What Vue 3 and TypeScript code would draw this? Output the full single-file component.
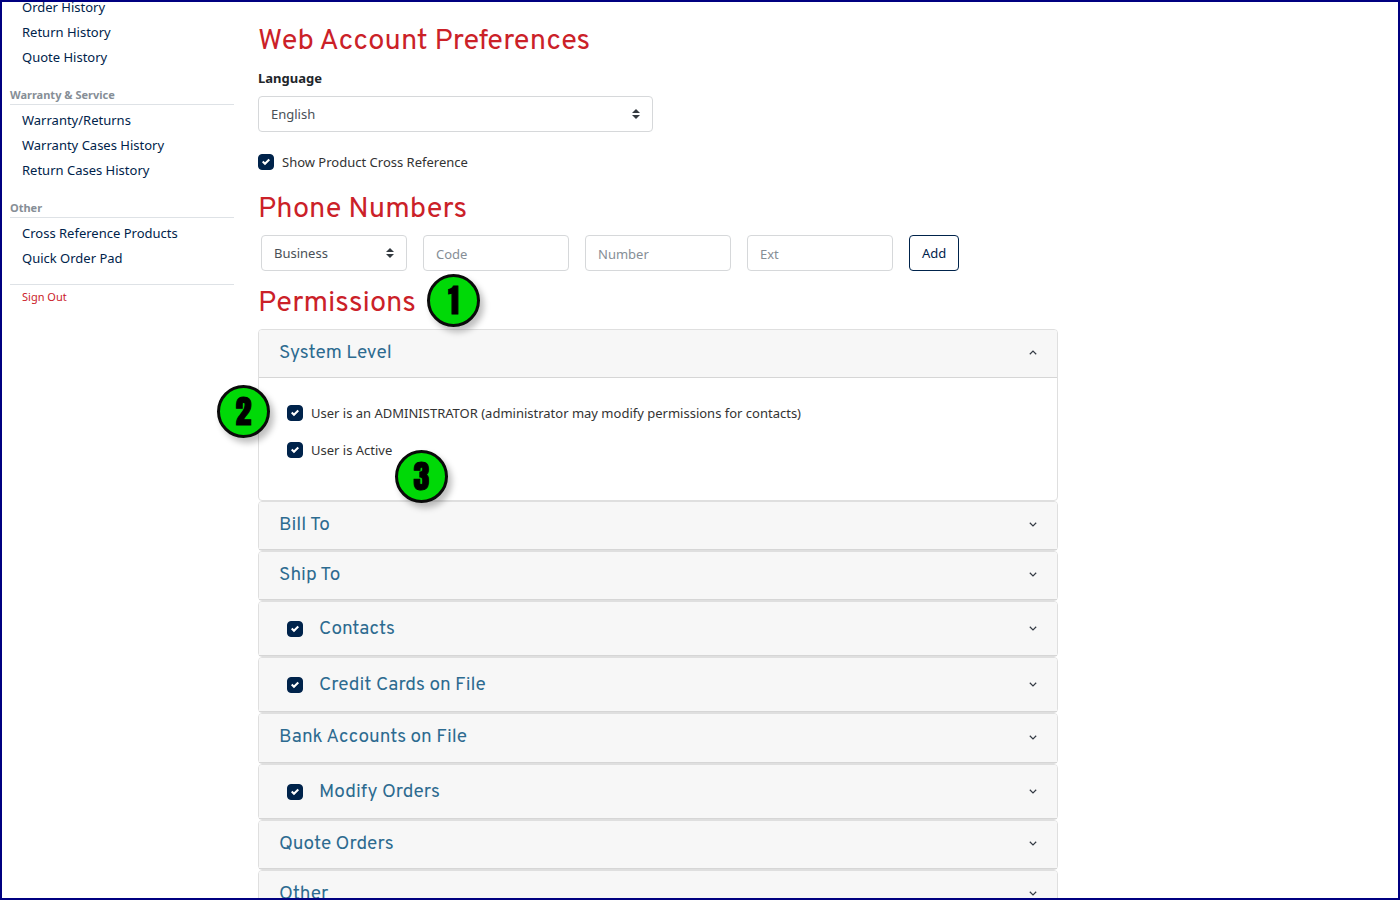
<script setup lang="ts">
import { reactive, ref } from 'vue'

interface NavGroup {
  title?: string
  links: string[]
}

interface Panel {
  id: string
  title: string
  open: boolean
  toggle: boolean
  enabled: boolean
  size: 'plain' | 'medium' | 'tall'
}

const navGroups: NavGroup[] = [
  { links: ['Order History', 'Return History', 'Quote History'] },
  { title: 'Warranty & Service', links: ['Warranty/Returns', 'Warranty Cases History', 'Return Cases History'] },
  { title: 'Other', links: ['Cross Reference Products', 'Quick Order Pad'] },
]

const language = ref('English')
const crossReference = ref(true)
const phoneType = ref('Business')
const phone = reactive({ code: '', number: '', ext: '' })
const isAdmin = ref(true)
const isActive = ref(true)

const panels = reactive<Panel[]>([
  { id: 'system', title: 'System Level', open: true, toggle: false, enabled: false, size: 'plain' },
  { id: 'bill', title: 'Bill To', open: false, toggle: false, enabled: false, size: 'plain' },
  { id: 'ship', title: 'Ship To', open: false, toggle: false, enabled: false, size: 'plain' },
  { id: 'contacts', title: 'Contacts', open: false, toggle: true, enabled: true, size: 'tall' },
  { id: 'cards', title: 'Credit Cards on File', open: false, toggle: true, enabled: true, size: 'tall' },
  { id: 'bank', title: 'Bank Accounts on File', open: false, toggle: false, enabled: false, size: 'medium' },
  { id: 'modify', title: 'Modify Orders', open: false, toggle: true, enabled: true, size: 'tall' },
  { id: 'quote', title: 'Quote Orders', open: false, toggle: false, enabled: false, size: 'plain' },
  { id: 'other', title: 'Other', open: false, toggle: false, enabled: false, size: 'plain' },
])
</script>

<template>
  <div class="frame">
    <nav class="sidebar" aria-label="Account">
      <section v-for="(group, i) in navGroups" :key="i" class="nav-group">
        <h2 v-if="group.title" class="nav-title">{{ group.title }}</h2>
        <ul class="nav-list">
          <li v-for="link in group.links" :key="link"><a href="#">{{ link }}</a></li>
        </ul>
      </section>
      <div class="sign-out"><a href="#">Sign Out</a></div>
    </nav>

    <main class="content">
      <h1 class="heading">Web Account Preferences</h1>
      <label class="field-label" for="language">Language</label>
      <select id="language" v-model="language" class="control select language">
        <option>English</option>
        <option>French</option>
      </select>
      <div class="check-row cross">
        <input id="cross" v-model="crossReference" type="checkbox" class="check" />
        <label for="cross">Show Product Cross Reference</label>
      </div>

      <h1 class="heading">Phone Numbers</h1>
      <form class="phone-row" @submit.prevent>
        <select v-model="phoneType" class="control select" aria-label="Phone type">
          <option>Business</option>
          <option>Mobile</option>
        </select>
        <input v-model="phone.code" class="control text" type="text" placeholder="Code" aria-label="Code" />
        <input v-model="phone.number" class="control text" type="text" placeholder="Number" aria-label="Number" />
        <input v-model="phone.ext" class="control text" type="text" placeholder="Ext" aria-label="Ext" />
        <button type="submit" class="add">Add</button>
      </form>

      <div class="permissions-title">
        <h1 class="heading">Permissions</h1>
        <span class="badge badge-one">1</span>
      </div>

      <section v-for="panel in panels" :key="panel.id" class="card">
        <header class="card-header" :class="panel.size">
          <input v-if="panel.toggle" :id="panel.id" v-model="panel.enabled" type="checkbox" class="check" />
          <h2 class="card-title">
            <label v-if="panel.toggle" :for="panel.id">{{ panel.title }}</label>
            <template v-else>{{ panel.title }}</template>
          </h2>
          <button
            type="button"
            class="chevron"
            :aria-expanded="panel.open"
            :aria-label="panel.title"
            @click="panel.open = !panel.open"
          >
            <svg viewBox="0 0 8 5" width="8" height="5" aria-hidden="true">
              <path v-if="panel.open" d="M.8 4.2 4 1.1l3.2 3.1" />
              <path v-else d="M.8.8 4 3.9 7.2.8" />
            </svg>
          </button>
        </header>
        <div v-if="panel.open" class="card-body">
          <template v-if="panel.id === 'system'">
            <div class="check-row">
              <input id="admin" v-model="isAdmin" type="checkbox" class="check" />
              <label for="admin">User is an ADMINISTRATOR (administrator may modify permissions for contacts)</label>
              <span class="badge badge-two">2</span>
            </div>
            <div class="check-row">
              <input id="active" v-model="isActive" type="checkbox" class="check" />
              <label for="active">User is Active</label>
              <span class="badge badge-three">3</span>
            </div>
          </template>
        </div>
      </section>
    </main>
  </div>
</template>

<style>
body {
  margin: 0;
  background: #fff;
}
</style>

<style scoped>
* {
  box-sizing: border-box;
}

.frame {
  display: grid;
  grid-template-columns: 224px minmax(0, 1fr);
  column-gap: 24px;
  height: 100vh;
  padding: 0 24px 0 8px;
  overflow: hidden;
  border: 2px solid #000080;
  font-family: 'Segoe UI', 'Noto Sans', sans-serif;
  font-size: 13px;
  line-height: 21px;
  color: #333;
}

a {
  color: #00234b;
  text-decoration: none;
}

.sidebar {
  margin-top: -7px;
}

.nav-group {
  margin-bottom: 17px;
}

.nav-title {
  margin: 0 0 3px;
  padding-bottom: 2px;
  border-bottom: 1px solid #dee2e6;
  font-size: 11px;
  line-height: 15px;
  font-weight: 700;
  color: #868e96;
}

.nav-list {
  margin: 0;
  padding: 0 0 0 12px;
  list-style: none;
  line-height: 25px;
}

.sign-out {
  margin-top: -4px;
  padding: 1px 12px;
  border-top: 1px solid #dee2e6;
  font-size: 11px;
}

.sign-out a {
  color: #cb2128;
}

.content {
  max-width: 800px;
  padding-top: 23px;
}

.heading {
  margin: 0 0 8px;
  font-family: Overpass, Roboto, sans-serif;
  font-size: 29px;
  line-height: 34px;
  font-weight: 400;
  color: #cb2128;
}

.field-label {
  display: block;
  padding-top: 1px;
  margin-bottom: 7px;
  font-weight: 700;
  color: #212529;
}

.control {
  width: 100%;
  min-width: 0;
  height: 36px;
  padding: 0 12px;
  border: 1px solid #d6d8da;
  border-radius: 4px;
  background: #fff;
  font: inherit;
  color: #495057;
}

.text {
  padding-top: 2px;
}

.control::placeholder {
  color: #868e96;
  opacity: 1;
}

.select {
  appearance: none;
  padding: 0 28px 0 12px;
  background: #fff url("data:image/svg+xml,%3Csvg xmlns='http://www.w3.org/2000/svg' viewBox='0 0 4 5'%3E%3Cpath fill='%23343a40' d='M2 0L0 2h4zm0 5L0 3h4z'/%3E%3C/svg%3E") no-repeat right 12px center / 8px 10px;
}

.language {
  display: block;
  width: calc(50% - 5px);
}

.check-row {
  position: relative;
  display: flex;
  align-items: flex-start;
  gap: 8px;
}

.check-row .check {
  margin-top: 2px;
}

.cross {
  margin: 20px 0;
}

.check {
  flex: none;
  appearance: none;
  width: 16px;
  height: 16px;
  margin: 0;
  border-radius: 4px;
  border: 1px solid #00234b;
}

.check:checked {
  background: #00234b url("data:image/svg+xml,%3Csvg xmlns='http://www.w3.org/2000/svg' viewBox='0 0 8 8'%3E%3Cpath fill='%23fff' d='M6.564.75l-3.59 3.612-1.538-1.55L0 4.26 2.974 7.25 8 2.193z'/%3E%3C/svg%3E") no-repeat center / 8px 8px;
}

.phone-row {
  display: grid;
  grid-template-columns: repeat(4, 146px) auto;
  justify-content: start;
  gap: 16px;
  margin: 0 0 16px 3px;
}

.add {
  padding: 0 12px;
  border: 1px solid #00234b;
  border-radius: 4px;
  background: #fff;
  font: inherit;
  color: #00234b;
}

.permissions-title {
  position: relative;
}

.card {
  border: 1px solid #dfdfdf;
  border-radius: 4px;
}

.card-header {
  display: flex;
  align-items: center;
  height: 48px;
  padding: 0 20px 2px;
  border-bottom: 1px solid #d6d6d6;
  border-radius: 3px 3px 0 0;
  background: #f7f7f7;
}

.card-header.medium {
  height: 49px;
}

.card-header.tall {
  height: 54px;
  padding: 0 20px 0 28px;
}

.card-header .check {
  margin-right: 16px;
}

.card-title {
  flex: 1;
  margin: 0;
  font-family: Overpass, Roboto, sans-serif;
  font-size: 19px;
  line-height: 24px;
  font-weight: 400;
  color: #2d6b90;
}

.chevron {
  display: flex;
  padding: 8px 0;
  border: 0;
  background: none;
}

.chevron svg {
  fill: none;
  stroke: #343a44;
  stroke-width: 1.2;
}

.card-body {
  display: flex;
  flex-direction: column;
  gap: 16px;
  padding: 25px 28px 39px;
}

.badge {
  position: absolute;
  z-index: 1;
  display: flex;
  align-items: center;
  justify-content: center;
  width: 53px;
  height: 53px;
  border: 3px solid #0a0a0a;
  border-radius: 50%;
  background: #00d907;
  box-shadow: 4px 5px 6px rgba(0, 0, 0, 0.25);
  font-family: Impact, Anton, 'Liberation Sans Narrow', 'Liberation Sans', sans-serif;
  font-size: 32px;
  line-height: 40px;
  font-weight: 400;
  color: #000;
  -webkit-text-stroke: 1px #000;
}

.badge-one {
  left: 169px;
  top: -13px;
}

.badge-two {
  left: -70px;
  top: -18px;
}

.badge-three {
  left: 108px;
  top: 10px;
}
</style>
